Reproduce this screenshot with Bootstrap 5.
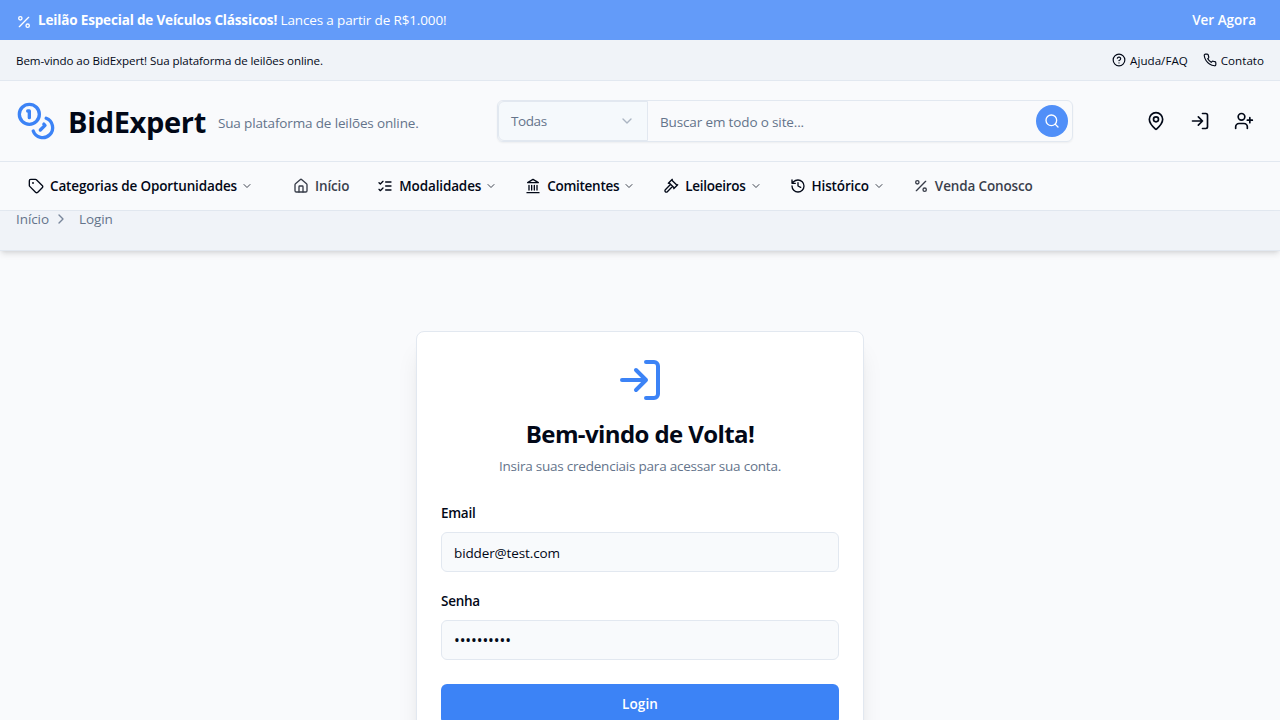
<!DOCTYPE html>
<html lang="pt-BR">
<head>
<meta charset="utf-8">
<meta name="viewport" content="width=device-width, initial-scale=1">
<title>BidExpert - Login</title>
<link href="https://cdn.jsdelivr.net/npm/bootstrap@5.3.0/dist/css/bootstrap.min.css" rel="stylesheet">
<style>
:root{--ink:#020817;--soft:#64748b;--line:#e2e8f0;--brand:#3c83f6;--page:#f9fafc;--band:#f0f3f8}
body{font-family:"Open Sans","Noto Sans",sans-serif;font-size:13.5px;line-height:20px;letter-spacing:-.14px;color:var(--ink);background:var(--page);height:100vh;overflow:hidden}
a{color:inherit;text-decoration:none}
svg{fill:none;stroke:currentColor;stroke-width:2;stroke-linecap:round;stroke-linejoin:round;flex:none;display:block}
.promo{height:40px;background:#639bf9;color:#fff}
.promo b{letter-spacing:-.16px}
.promo-icon{margin:4px 6px 0 0}
.promo-link{letter-spacing:0;margin-right:8px}
.welcome{height:41px;background:var(--band);border-bottom:1px solid var(--line);font-size:11.6px;letter-spacing:-.1px}
.welcome span{padding-top:2px}
.welcome .links{gap:15px;letter-spacing:.02px}
.brandbar{height:81px;border-bottom:1px solid var(--line)}
.brandbar .identity{flex:0 0 481px;white-space:nowrap}
.identity svg{color:var(--brand)}
.brand-name{font-size:29px;font-weight:700;letter-spacing:-.33px;margin-left:12px;padding-top:2px}
.tagline{margin:4px 0 0 12px}
.soft{color:var(--soft)}
.search{width:576px;height:42px;border:1px solid var(--line);border-radius:6px;box-shadow:0 1px 2px rgba(0,0,0,.05);flex:none}
.search-cat{width:150px;border:1px solid var(--line);border-radius:6px 0 0 6px;background:#f5f9fc;padding:0 12px;letter-spacing:-.4px}
.search-text{padding:2px 0 0 12px}
.search-go{width:32px;height:32px;background:#508ff8;color:#fff;margin-right:4px}
.mainnav{height:49px;border-bottom:1px solid var(--line);font-weight:600}
.mainnav a{display:flex;align-items:center;gap:6px;padding:0 12px;margin-right:4px}
.mainnav a:first-child{margin-right:16px}
.mainnav .chev{margin-left:-2px;opacity:.75}
.mainnav .dim{opacity:.78}
.mainnav .tight{letter-spacing:-.28px}
.crumbs{height:40px;background:var(--band);border-bottom:1px solid var(--line);box-shadow:0 4px 6px -1px rgba(0,0,0,.1),0 2px 4px -2px rgba(0,0,0,.1)}
.crumbs a,.crumbs span{margin-top:-2px;letter-spacing:-.08px}
.crumbs svg{margin:0 10px 0 4px;opacity:.85}
.login-card{width:448px;margin-top:80px;border:1px solid var(--line);border-radius:8px;box-shadow:0 20px 25px -5px rgba(0,0,0,.1),0 8px 10px -6px rgba(0,0,0,.1);padding:24px}
.login-card .lead-icon{color:var(--brand)}
.login-card h1{font-size:24px;line-height:24px;font-weight:700;letter-spacing:-.6px;margin:18px 0 10px}
.login-card .hint{letter-spacing:-.225px;margin-bottom:30px}
.login-card label{font-weight:600;line-height:14px;letter-spacing:-.28px;margin-bottom:12px;display:block}
.login-card .form-control{height:40px;border-color:var(--line);border-radius:6px;background:#f8fafc;color:var(--ink);font-size:13.5px;padding:2px 12px 0;letter-spacing:-.11px;margin-bottom:22px}
.login-card .secret{letter-spacing:-.1px;font-size:15.4px;padding-top:0;margin-bottom:24px}
.login-card .btn{height:40px;background:var(--brand);color:#fff;font-size:13.5px;font-weight:600;border:0;border-radius:6px;letter-spacing:.1px}
</style>
</head>
<body>
<svg width="0" height="0" class="position-absolute"><defs>
<symbol id="percent" viewBox="0 0 24 24"><path d="M19 5 5 19"/><circle cx="6.5" cy="6.5" r="2.5"/><circle cx="17.5" cy="17.5" r="2.5"/></symbol>
<symbol id="down" viewBox="0 0 24 24"><path d="m6 9 6 6 6-6"/></symbol>
<symbol id="login" viewBox="0 0 24 24"><path d="M15 3h4a2 2 0 0 1 2 2v14a2 2 0 0 1-2 2h-4M10 17l5-5-5-5M15 12H3"/></symbol>
</defs></svg>

<div class="promo d-flex align-items-center justify-content-between px-3">
  <div class="d-flex align-items-center"><svg class="promo-icon" width="16" height="16"><use href="#percent"/></svg><span><b>Leilão Especial de Veículos Clássicos!</b> Lances a partir de R$1.000!</span></div>
  <a href="#" class="promo-link fw-semibold">Ver Agora</a>
</div>

<div class="welcome d-flex align-items-center justify-content-between px-3">
  <span>Bem-vindo ao BidExpert! Sua plataforma de leilões online.</span>
  <div class="links d-flex">
    <a href="#" class="d-flex align-items-center gap-1"><svg width="14" height="14" viewBox="0 0 24 24"><circle cx="12" cy="12" r="10"/><path d="M9.09 9a3 3 0 0 1 5.83 1c0 2-3 3-3 3M12 17h.01"/></svg><span>Ajuda/FAQ</span></a>
    <a href="#" class="d-flex align-items-center gap-1"><svg width="14" height="14" viewBox="0 0 24 24"><path d="M22 16.92v3a2 2 0 0 1-2.18 2 19.79 19.79 0 0 1-8.63-3.07 19.5 19.5 0 0 1-6-6 19.79 19.79 0 0 1-3.07-8.67A2 2 0 0 1 4.11 2h3a2 2 0 0 1 2 1.72 12.84 12.84 0 0 0 .7 2.81 2 2 0 0 1-.45 2.11L8.09 9.91a16 16 0 0 0 6 6l1.27-1.27a2 2 0 0 1 2.11-.45 12.84 12.84 0 0 0 2.81.7A2 2 0 0 1 22 16.92z"/></svg><span>Contato</span></a>
  </div>
</div>

<header class="brandbar d-flex align-items-center px-3">
  <div class="identity d-flex align-items-center">
    <svg width="40" height="40" viewBox="0 0 24 24"><circle cx="8" cy="8" r="6"/><path d="M18.09 10.37A6 6 0 1 1 10.34 18M7 6h1v4M16.71 13.88l.7.71-2.82 2.82"/></svg>
    <span class="brand-name">BidExpert</span>
    <span class="tagline soft">Sua plataforma de leilões online.</span>
  </div>
  <div class="search d-flex align-items-center">
    <div class="search-cat soft d-flex align-items-center justify-content-between h-100">Todas<svg width="16" height="16" opacity=".5"><use href="#down"/></svg></div>
    <span class="search-text soft flex-grow-1">Buscar em todo o site...</span>
    <a href="#" class="search-go rounded-circle d-flex align-items-center justify-content-center"><svg width="16" height="16" viewBox="0 0 24 24"><circle cx="11" cy="11" r="8"/><path d="m21 21-4.3-4.3"/></svg></a>
  </div>
  <div class="d-flex flex-grow-1 justify-content-end gap-4 pe-2">
    <svg width="20" height="20" viewBox="0 0 24 24"><path d="M20 10c0 4.993-5.539 10.193-7.399 11.799a1 1 0 0 1-1.202 0C9.539 20.193 4 14.993 4 10a8 8 0 0 1 16 0"/><circle cx="12" cy="10" r="3"/></svg>
    <svg width="20" height="20"><use href="#login"/></svg>
    <svg width="20" height="20" viewBox="0 0 24 24" class="me-0"><path d="M16 21v-2a4 4 0 0 0-4-4H6a4 4 0 0 0-4 4v2M19 8v6M22 11h-6"/><circle cx="9" cy="7" r="4"/></svg>
    <span style="margin-left:-22px"></span>
  </div>
</header>

<nav class="mainnav d-flex align-items-center px-3">
  <a href="#"><svg width="16" height="16" viewBox="0 0 24 24"><path d="M12.586 2.586A2 2 0 0 0 11.172 2H4a2 2 0 0 0-2 2v7.172a2 2 0 0 0 .586 1.414l8.704 8.704a2.426 2.426 0 0 0 3.42 0l6.58-6.58a2.426 2.426 0 0 0 0-3.42z"/><circle cx="7.5" cy="7.5" r=".5" fill="currentColor"/></svg>Categorias de Oportunidades<svg class="chev" width="12" height="12"><use href="#down"/></svg></a>
  <a href="#" class="dim"><svg width="16" height="16" viewBox="0 0 24 24"><path d="M15 21v-8a1 1 0 0 0-1-1h-4a1 1 0 0 0-1 1v8"/><path d="M3 10a2 2 0 0 1 .709-1.528l7-5.999a2 2 0 0 1 2.582 0l7 5.999A2 2 0 0 1 21 10v9a2 2 0 0 1-2 2H5a2 2 0 0 1-2-2z"/></svg>Início</a>
  <a href="#"><svg width="16" height="16" viewBox="0 0 24 24"><path d="m3 17 2 2 4-4M3 7l2 2 4-4M13 6h8M13 12h8M13 18h8"/></svg>Modalidades<svg class="chev" width="12" height="12"><use href="#down"/></svg></a>
  <a href="#"><svg width="16" height="16" viewBox="0 0 24 24"><path d="M3 22h18M6 18v-7M10 18v-7M14 18v-7M18 18v-7M12 2l8 5H4z"/></svg><span class="tight">Comitentes</span><svg class="chev" width="12" height="12"><use href="#down"/></svg></a>
  <a href="#"><svg width="16" height="16" viewBox="0 0 24 24"><path d="m14.5 12.5-8 8a2.119 2.119 0 1 1-3-3l8-8M16 16l6-6M8 8l6-6M9 7l8 8M21 11l-8-8"/></svg><span class="tight">Leiloeiros</span><svg class="chev" width="12" height="12"><use href="#down"/></svg></a>
  <a href="#"><svg width="16" height="16" viewBox="0 0 24 24"><path d="M3 12a9 9 0 1 0 9-9 9.75 9.75 0 0 0-6.74 2.74L3 8M3 3v5h5M12 7v5l4 2"/></svg>Histórico<svg class="chev" width="12" height="12"><use href="#down"/></svg></a>
  <a href="#" class="dim"><svg width="16" height="16"><use href="#percent"/></svg>Venda Conosco</a>
</nav>

<div class="crumbs soft px-3 d-flex align-items-start"><a href="#">Início</a><svg width="16" height="16" viewBox="0 0 24 24"><path d="m9 18 6-6-6-6"/></svg><span>Login</span></div>

<main class="login-card bg-white mx-auto">
  <div class="text-center">
    <svg width="48" height="48" class="lead-icon mx-auto"><use href="#login"/></svg>
    <h1>Bem-vindo de Volta!</h1>
    <p class="hint soft">Insira suas credenciais para acessar sua conta.</p>
  </div>
  <form>
    <label for="email">Email</label>
    <input id="email" type="text" class="form-control" value="bidder@test.com">
    <label for="senha">Senha</label>
    <input id="senha" type="text" class="form-control secret" value="••••••••••">
    <button type="button" class="btn w-100">Login</button>
  </form>
</main>
<script src="https://cdn.jsdelivr.net/npm/bootstrap@5.3.0/dist/js/bootstrap.bundle.min.js"></script>
</body>
</html>
